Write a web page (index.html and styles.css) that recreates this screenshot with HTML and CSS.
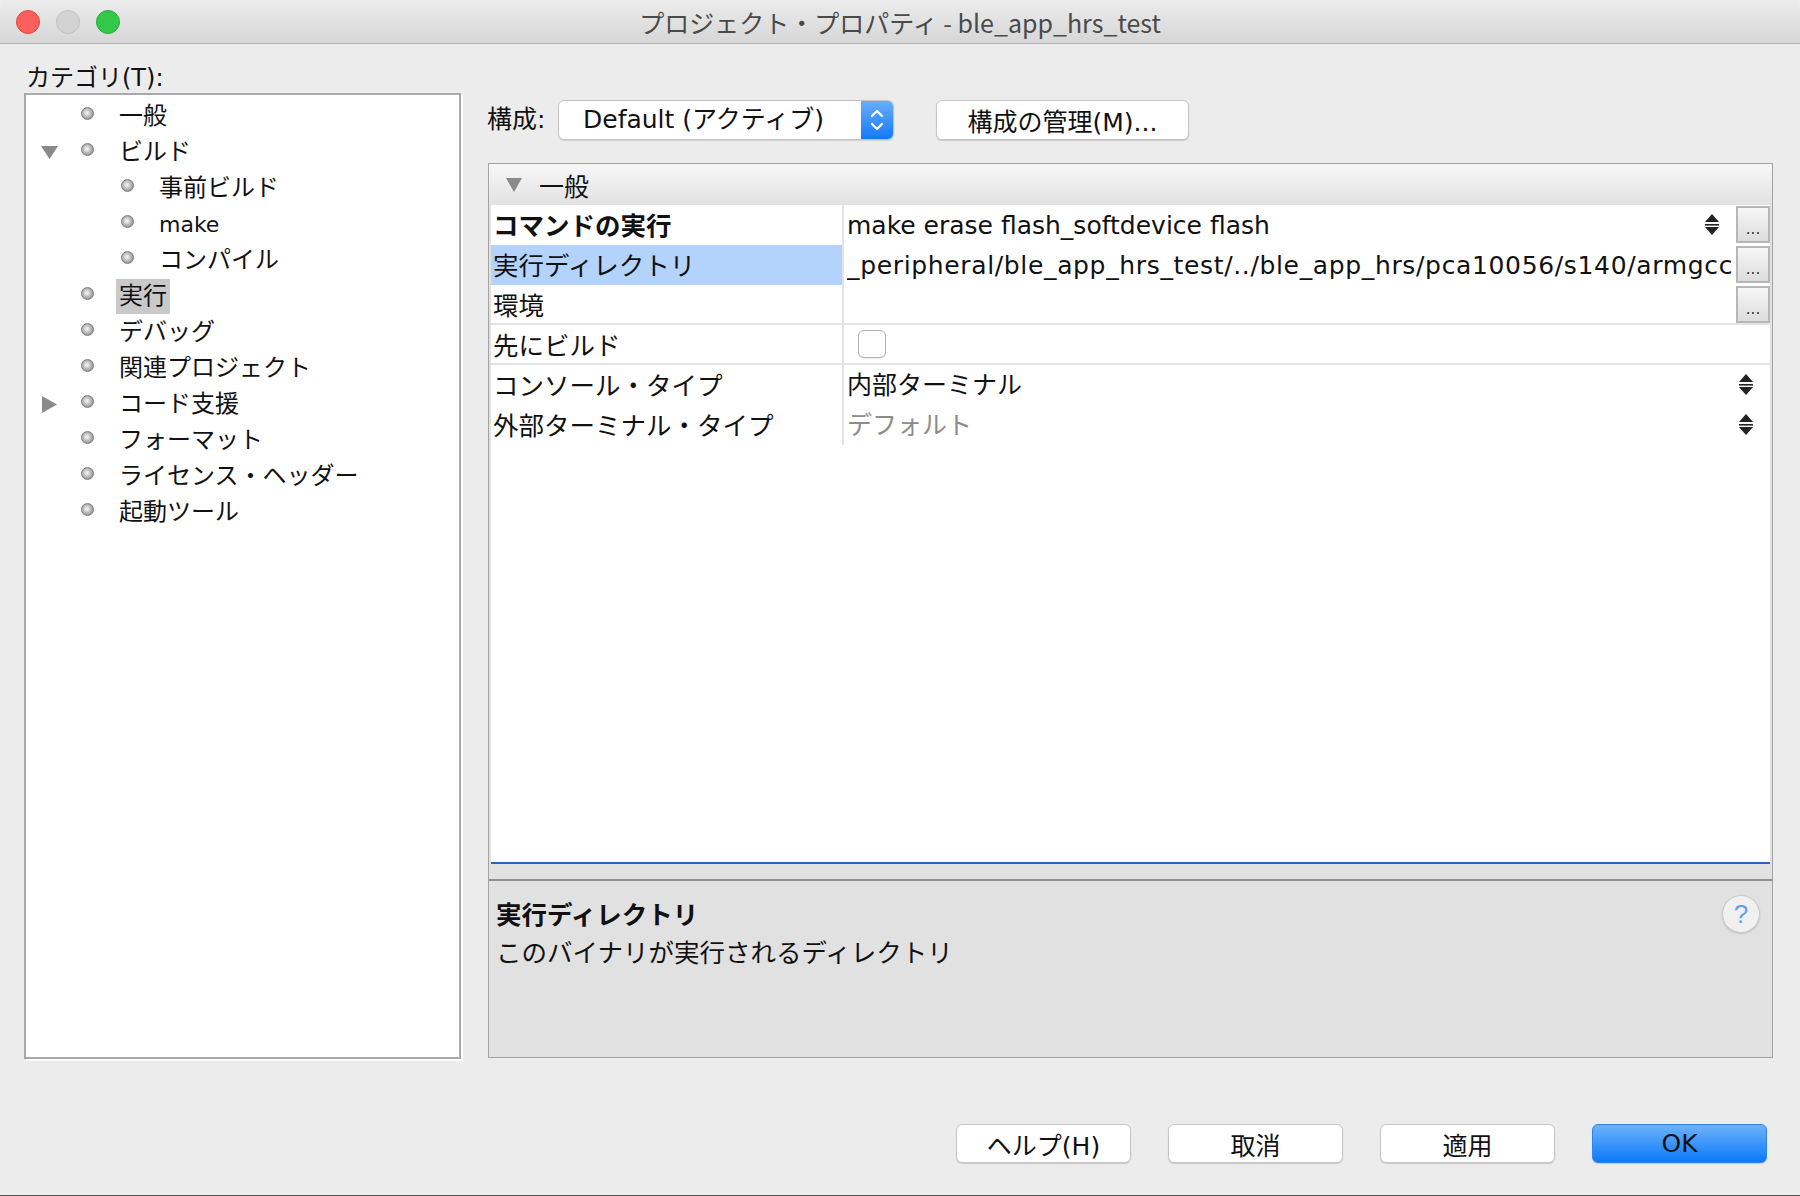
FILE: index.html
```html
<!DOCTYPE html>
<html lang="ja">
<head>
<meta charset="utf-8">
<title>プロジェクト・プロパティ - ble_app_hrs_test</title>
<link rel="stylesheet" href="styles.css">
</head>
<body>
<div class="window">
  <div class="titlebar">
    <div class="lights">
      <span class="light red"></span>
      <span class="light gray"></span>
      <span class="light green"></span>
    </div>
    <div class="title">プロジェクト・プロパティ - ble_app_hrs_test</div>
    <div></div>
  </div>

  <div class="panes">
    <div class="left-col">
      <div class="cat-label">カテゴリ(T):</div>
      <div class="tree">
        <div class="node"><span class="twisty"></span><span class="bullet"></span><span class="node-text">一般</span></div>
        <div class="node"><span class="twisty"><svg width="17" height="13" viewBox="0 0 17 13"><polygon points="0,0 17,0 8.5,13" fill="#8a8a8a"/></svg></span><span class="bullet"></span><span class="node-text">ビルド</span></div>
        <div class="node sub"><span class="twisty"></span><span class="bullet"></span><span class="node-text">事前ビルド</span></div>
        <div class="node sub"><span class="twisty"></span><span class="bullet"></span><span class="node-text latin">make</span></div>
        <div class="node sub"><span class="twisty"></span><span class="bullet"></span><span class="node-text">コンパイル</span></div>
        <div class="node"><span class="twisty"></span><span class="bullet"></span><span class="node-text selected">実行</span></div>
        <div class="node"><span class="twisty"></span><span class="bullet"></span><span class="node-text">デバッグ</span></div>
        <div class="node"><span class="twisty"></span><span class="bullet"></span><span class="node-text">関連プロジェクト</span></div>
        <div class="node"><span class="twisty"><svg width="15" height="17" viewBox="0 0 15 17"><polygon points="0,0 15,8.5 0,17" fill="#8a8a8a"/></svg></span><span class="bullet"></span><span class="node-text">コード支援</span></div>
        <div class="node"><span class="twisty"></span><span class="bullet"></span><span class="node-text">フォーマット</span></div>
        <div class="node"><span class="twisty"></span><span class="bullet"></span><span class="node-text">ライセンス・ヘッダー</span></div>
        <div class="node"><span class="twisty"></span><span class="bullet"></span><span class="node-text">起動ツール</span></div>
      </div>
    </div>

    <div class="right-col">
      <div class="config-row">
        <span class="config-label">構成:</span>
        <div class="combo">
          <span class="combo-text">Default (アクティブ)</span>
          <span class="combo-stepper">
            <svg width="14" height="22" viewBox="0 0 14 22"><polyline points="2,7 7,2 12,7" fill="none" stroke="#fff" stroke-width="2.2" stroke-linecap="round" stroke-linejoin="round"/><polyline points="2,15 7,20 12,15" fill="none" stroke="#fff" stroke-width="2.2" stroke-linecap="round" stroke-linejoin="round"/></svg>
          </span>
        </div>
        <button class="btn manage">構成の管理(M)...</button>
      </div>

      <div class="sheet">
        <div class="group-header">
          <svg width="16" height="14" viewBox="0 0 16 14"><polygon points="0,0 16,0 8,14" fill="#8a8a8a"/></svg>
          <span>一般</span>
        </div>
        <div class="prop-row">
          <div class="prop-label bold">コマンドの実行</div>
          <div class="prop-value">
            <span class="val-text">make erase flash_softdevice flash</span>
            <span class="stepper cmd-stepper"><svg width="16" height="22" viewBox="0 0 16 22"><polygon points="8,0 15,8 1,8" fill="#222"/><rect x="1" y="10" width="14" height="1.6" fill="#222"/><polygon points="1,13 15,13 8,21" fill="#222"/></svg></span>
            <span class="ellipsis">...</span>
          </div>
        </div>
        <div class="prop-row">
          <div class="prop-label selected">実行ディレクトリ</div>
          <div class="prop-value">
            <span class="val-text path">_peripheral/ble_app_hrs_test/../ble_app_hrs/pca10056/s140/armgcc</span>
            <span class="ellipsis">...</span>
          </div>
        </div>
        <div class="prop-row">
          <div class="prop-label">環境</div>
          <div class="prop-value">
            <span class="val-text"></span>
            <span class="ellipsis">...</span>
          </div>
        </div>
        <div class="prop-row">
          <div class="prop-label">先にビルド</div>
          <div class="prop-value">
            <span class="checkbox"></span>
          </div>
        </div>
        <div class="prop-row">
          <div class="prop-label">コンソール・タイプ</div>
          <div class="prop-value">
            <span class="val-text">内部ターミナル</span>
            <span class="stepper"><svg width="16" height="22" viewBox="0 0 16 22"><polygon points="8,0 15,8 1,8" fill="#222"/><rect x="1" y="10" width="14" height="1.6" fill="#222"/><polygon points="1,13 15,13 8,21" fill="#222"/></svg></span>
          </div>
        </div>
        <div class="prop-row">
          <div class="prop-label">外部ターミナル・タイプ</div>
          <div class="prop-value">
            <span class="val-text muted">デフォルト</span>
            <span class="stepper"><svg width="16" height="22" viewBox="0 0 16 22"><polygon points="8,0 15,8 1,8" fill="#222"/><rect x="1" y="10" width="14" height="1.6" fill="#222"/><polygon points="1,13 15,13 8,21" fill="#222"/></svg></span>
          </div>
        </div>
        <div class="sheet-fill"></div>
        <div class="sheet-strip"></div>
        <div class="desc">
          <div class="desc-text">
            <div class="desc-title">実行ディレクトリ</div>
            <div class="desc-body">このバイナリが実行されるディレクトリ</div>
          </div>
          <span class="help-circle">?</span>
        </div>
      </div>
    </div>
  </div>

  <div class="footer">
    <button class="btn foot">ヘルプ(H)</button>
    <button class="btn foot">取消</button>
    <button class="btn foot">適用</button>
    <button class="btn foot default">OK</button>
  </div>
</div>
</body>
</html>
```

FILE: styles.css
```css
* { box-sizing: border-box; margin: 0; padding: 0; }

body {
  width: 1800px;
  height: 1196px;
  overflow: hidden;
  background: #ececec;
  font-family: "DejaVu Sans", "Noto Sans CJK JP", sans-serif;
  color: #111;
}

.window {
  height: 1196px;
  display: flex;
  flex-direction: column;
  border-bottom: 1px solid #555;
  border-radius: 10px 10px 0 0;
  overflow: hidden;
}

/* title bar */
.titlebar {
  height: 44px;
  flex: none;
  display: grid;
  grid-template-columns: 1fr auto 1fr;
  align-items: center;
  background: linear-gradient(#ececec, #d6d6d6);
  border-bottom: 1px solid #b4b4b4;
}
.lights { display: flex; gap: 16px; padding-left: 16px; }
.light { width: 24px; height: 24px; border-radius: 50%; display: block; }
.light.red { background: #fc605b; border: 1px solid #e2463f; }
.light.gray { background: #d3d3d3; border: 1px solid #c0c0c0; }
.light.green { background: #34c84a; border: 1px solid #28a93a; }
.title {
  font-family: "Noto Sans CJK JP", sans-serif;
  font-size: 25px;
  color: #4a4a4a;
  line-height: 30px;
}

/* panes */
.panes {
  display: flex;
  padding-left: 24px;
  height: 1015px;
  flex: none;
}
.left-col { width: 441px; display: flex; flex-direction: column; }
.cat-label {
  margin-top: 20px;
  height: 29px;
  font-size: 24px;
  line-height: 28px;
  padding-left: 2px;
}
.tree {
  height: 966px;
  width: 437px;
  background: #fff;
  border: 2px solid #a9a9a9;
  box-shadow: 2px 2px 0 #fff;
  padding-top: 3px;
}
.node {
  height: 36px;
  display: flex;
  align-items: center;
  padding-left: 8px;
  font-size: 24px;
}
.node.sub { padding-left: 48px; }
.twisty {
  width: 30px;
  height: 36px;
  display: flex;
  align-items: center;
  justify-content: center;
  flex: none;
}
.bullet {
  width: 13px;
  height: 13px;
  border-radius: 50%;
  margin-left: 17px;
  margin-right: 25px;
  margin-top: -5px;
  flex: none;
  background: radial-gradient(circle at 45% 45%, #fafafa 0, #d8d8d8 25%, #a0a0a0 65%, #707070 100%);
  border: 1px solid #7e7e7e;
}
.node-text { line-height: 35px; height: 35px; white-space: nowrap; }
.node-text.latin { font-size: 22px; }
.node-text.selected {
  background: #c9c9c9;
  padding: 0 3px;
  margin-left: -3px;
}

/* right column */
.right-col {
  width: 1286px;
  margin-left: 22px;
  display: flex;
  flex-direction: column;
}
.config-row {
  margin-top: 56px;
  height: 40px;
  display: flex;
  align-items: center;
}
.config-label { font-size: 25px; width: 71px; line-height: 40px; }
.combo {
  width: 336px;
  height: 40px;
  display: flex;
  background: #fff;
  border: 1px solid #c3c3c3;
  border-radius: 6px;
  box-shadow: 0 1px 1px rgba(0,0,0,0.12);
  overflow: hidden;
}
.combo-text {
  flex: 1;
  font-size: 25px;
  line-height: 38px;
  padding-left: 24px;
  white-space: nowrap;
}
.combo-stepper {
  width: 32px;
  display: flex;
  align-items: center;
  justify-content: center;
  background: linear-gradient(#6aaefc, #1479f7);
}
.btn {
  font-family: "DejaVu Sans", "Noto Sans CJK JP", sans-serif;
  font-size: 25px;
  color: #111;
  background: #fff;
  border: 1px solid #c6c6c6;
  border-radius: 6px;
  box-shadow: 0 1px 1px rgba(0,0,0,0.15);
  height: 40px;
}
.btn.manage { width: 253px; margin-left: 42px; }

/* property sheet */
.sheet {
  margin-top: 23px;
  margin-left: 1px;
  width: 1285px;
  height: 895px;
  border: 1px solid #a3a3a3;
  background: #e1e1e1;
  display: flex;
  flex-direction: column;
}
.group-header {
  height: 41px;
  flex: none;
  display: flex;
  align-items: center;
  gap: 17px;
  padding-left: 17px;
  background: linear-gradient(#f7f7f7, #e2e2e2);
  font-size: 25px;
}
.prop-row {
  height: 40px;
  flex: none;
  margin: 0 2px;
  display: grid;
  grid-template-columns: 351px 1fr;
  column-gap: 2px;
  background: #e3e3e3;
  padding-bottom: 2px;
}
.prop-label {
  background: #fff;
  font-size: 25.5px;
  line-height: 38px;
  padding-top: 2px;
  padding-left: 2px;
  white-space: nowrap;
  overflow: hidden;
}
.prop-label.bold { font-weight: bold; }
.prop-label.selected { background: #b3d3fd; }
.prop-value {
  background: #fff;
  display: flex;
  align-items: center;
  padding-left: 3px;
  min-width: 0;
}
.val-text {
  flex: 1;
  font-size: 25px;
  line-height: 38px;
  padding-top: 2px;
  white-space: nowrap;
  overflow: hidden;
  min-width: 0;
}
.val-text.path { letter-spacing: 0.65px; }
.val-text.muted { color: #8c8c8c; }
.stepper { width: 16px; height: 22px; display: flex; margin-right: 16px; flex: none; }
.cmd-stepper { margin-right: 16px; }
.ellipsis {
  width: 34px;
  height: 37px;
  flex: none;
  align-self: flex-start;
  margin-top: 1px;
  border: 2px solid #b7b7b7;
  background: linear-gradient(#f6f6f6, #dcdcdc);
  font-size: 15px;
  line-height: 14px;
  color: #333;
  text-align: center;
  display: flex;
  align-items: flex-end;
  justify-content: center;
  padding-bottom: 5px;
}
.checkbox {
  width: 28px;
  height: 28px;
  margin-left: 11px;
  border: 1.5px solid #b3b3b3;
  border-radius: 6px;
  background: #fff;
  box-shadow: 0 1px 1px rgba(0,0,0,0.08);
}
.sheet-fill {
  flex: 1;
  margin: 0 2px;
  background: #fff;
  border-bottom: 2px solid #2c63c8;
}
.sheet-strip {
  height: 17px;
  flex: none;
  background: #e1e1e1;
  border-bottom: 2px solid #8e8e8e;
}
.desc {
  height: 176px;
  flex: none;
  display: flex;
  padding-left: 7px;
  padding-right: 12px;
}
.desc-text { flex: 1; padding-top: 19px; }
.desc-title { font-size: 25.5px; font-weight: bold; line-height: 30px; margin-bottom: 8px; }
.desc-body { font-size: 25.5px; line-height: 30px; }
.help-circle {
  width: 38px;
  height: 38px;
  margin-top: 14px;
  border-radius: 50%;
  background: #f0f0f0;
  border: 1px solid #c9c9c9;
  box-shadow: 0 1px 2px rgba(0,0,0,0.15);
  color: #5da2ef;
  font-family: "Liberation Sans", sans-serif;
  font-size: 26px;
  line-height: 36px;
  text-align: center;
}

/* footer */
.footer {
  display: flex;
  justify-content: flex-end;
  gap: 37px;
  padding-top: 65px;
  padding-right: 33px;
}
.btn.foot { width: 175px; height: 39px; }
.btn.foot.default {
  background: linear-gradient(#6cb2fb, #0b79f8);
  border-color: #2c84ee;
}
```
